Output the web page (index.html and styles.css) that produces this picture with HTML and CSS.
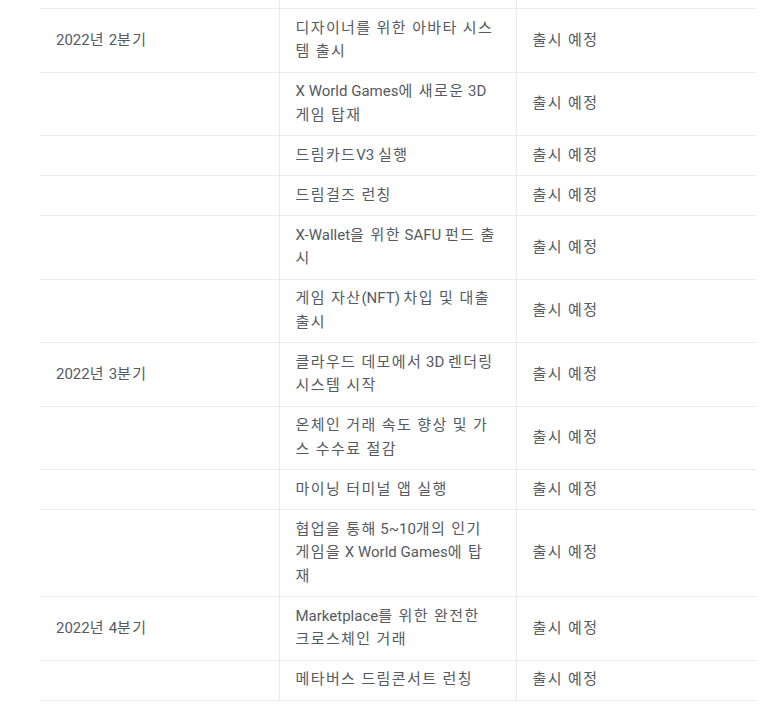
FILE: index.html
```html
<!DOCTYPE html>
<html lang="ko">
<head>
<meta charset="utf-8">
<link rel="stylesheet" href="styles.css">
</head>
<body>
<div class="page">
<table class="roadmap">
<colgroup><col class="c1"><col class="c2"><col class="c3"></colgroup>
<tbody>
<tr class="cut"><td></td><td></td><td></td></tr>
<tr><td>2022<span class="ko">년</span> 2<span class="ko">분기</span></td><td><span class="ko">디자이너를 위한 아바타 시스템 출시</span></td><td><span class="ko">출시 예정</span></td></tr>
<tr><td></td><td>X World Games<span class="ko">에 새로운</span> 3D <span class="ko">게임 탑재</span></td><td><span class="ko">출시 예정</span></td></tr>
<tr><td></td><td><span class="ko">드림카드</span>V3 <span class="ko">실행</span></td><td><span class="ko">출시 예정</span></td></tr>
<tr><td></td><td><span class="ko">드림걸즈 런칭</span></td><td><span class="ko">출시 예정</span></td></tr>
<tr><td></td><td>X-Wallet<span class="ko">을 위한</span> SAFU <span class="ko">펀드 출시</span></td><td><span class="ko">출시 예정</span></td></tr>
<tr><td></td><td><span class="ko">게임 자산</span>(NFT) <span class="ko">차입 및 대출 출시</span></td><td><span class="ko">출시 예정</span></td></tr>
<tr><td>2022<span class="ko">년</span> 3<span class="ko">분기</span></td><td><span class="ko">클라우드 데모에서</span> 3D <span class="ko">렌더링 시스템 시작</span></td><td><span class="ko">출시 예정</span></td></tr>
<tr><td></td><td><span class="ko">온체인 거래 속도 향상 및 가스 수수료 절감</span></td><td><span class="ko">출시 예정</span></td></tr>
<tr><td></td><td><span class="ko">마이닝 터미널 앱 실행</span></td><td><span class="ko">출시 예정</span></td></tr>
<tr><td></td><td><span class="ko">협업을 통해</span> 5~10<span class="ko">개의 인기 게임을</span> X World Games<span class="ko">에 탑재</span></td><td><span class="ko">출시 예정</span></td></tr>
<tr><td>2022<span class="ko">년</span> 4<span class="ko">분기</span></td><td>Marketplace<span class="ko">를 위한 완전한 크로스체인 거래</span></td><td><span class="ko">출시 예정</span></td></tr>
<tr><td></td><td><span class="ko">메타버스 드림콘서트 런칭</span></td><td><span class="ko">출시 예정</span></td></tr>
</tbody>
</table>
</div>
</body>
</html>
```

FILE: styles.css
```css
html, body {
  margin: 0;
  padding: 0;
  background: #ffffff;
}
.page {
  padding: 0 17px 0 40px;
}
.roadmap {
  width: 716px;
  border-collapse: collapse;
  table-layout: fixed;
  font-family: Roboto, "Noto Sans CJK KR", sans-serif;
  font-size: 15px;
  line-height: 23.5px;
  color: #555a62;
}
.ko {
  letter-spacing: 1.4px;
}
.c1 { width: 239px; }
.c2 { width: 237px; }
.c3 { width: 240px; }
.roadmap td {
  padding: 7.75px 18px 7.75px 16px;
  border-bottom: 1px solid #e8eaee;
  vertical-align: middle;
  text-align: left;
}
.roadmap td + td {
  border-left: 1px solid #e8eaee;
}
.roadmap tr.cut td {
  padding: 0;
  height: 8px;
}
```
